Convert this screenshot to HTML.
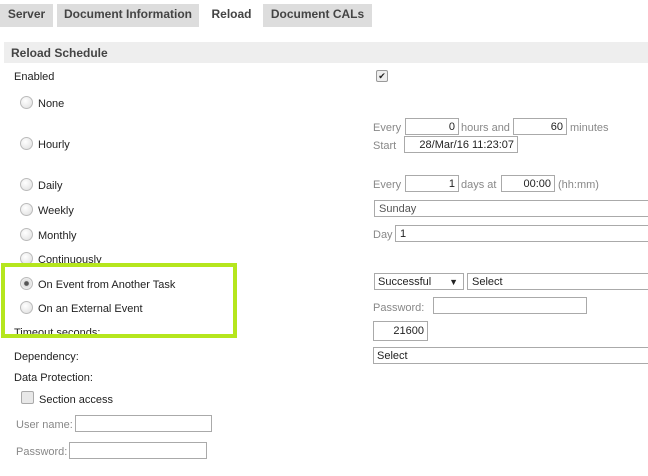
<!DOCTYPE html>
<html><head><style>
body{margin:0;width:648px;height:476px;background:#fff;font-family:"Liberation Sans",sans-serif;font-size:11px;color:#222;position:relative;overflow:hidden}
.a{position:absolute;white-space:nowrap}
.tab{position:absolute;top:4px;height:23px;background:#ddd;font-weight:bold;font-size:12px;color:#444;line-height:20px;text-align:center}
.r{position:absolute;width:11px;height:11px;border-radius:50%;border:1px solid #bbb;background:radial-gradient(circle at 40% 35%,#fff,#ddd)}
.in{position:absolute;height:17px;border:1px solid #aaa;box-sizing:border-box;background:#fff;text-align:right;padding-right:3px;line-height:16px;font-size:11px}
.g{color:#888}
</style></head><body>
<div class="tab" style="left:0;width:53px">Server</div>
<div class="tab" style="left:57px;width:142px">Document Information</div>
<div class="tab" style="left:203px;width:57px;background:#fff">Reload</div>
<div class="tab" style="left:263px;width:109px">Document CALs</div>
<div class="a" style="left:4px;top:42px;width:644px;height:21px;background:#eee;font-weight:bold;font-size:12px;color:#444;line-height:22px;padding-left:7px;box-sizing:border-box">Reload Schedule</div>
<div class="a" style="left:14px;top:71px">Enabled</div>
<div class="a" style="left:376px;top:70px;width:10px;height:10px;border:1px solid #999;border-radius:2px;background:#eee;font-size:9px;line-height:10px;text-align:center">✔</div>

<div class="r" style="left:20px;top:96px"></div><div class="a" style="left:38px;top:98px">None</div>
<div class="r" style="left:20px;top:137px"></div><div class="a" style="left:38px;top:139px">Hourly</div>
<div class="r" style="left:20px;top:178px"></div><div class="a" style="left:38px;top:180px">Daily</div>
<div class="r" style="left:20px;top:203px"></div><div class="a" style="left:38px;top:205px">Weekly</div>
<div class="r" style="left:20px;top:228px"></div><div class="a" style="left:38px;top:230px">Monthly</div>
<div class="r" style="left:20px;top:252px"></div><div class="a" style="left:38px;top:254px">Continuously</div>
<div class="r" style="left:20px;top:277px;background:radial-gradient(circle,#555 25%,#ddd 35%,#fff)"></div><div class="a" style="left:38px;top:279px">On Event from Another Task</div>
<div class="r" style="left:20px;top:301px"></div><div class="a" style="left:38px;top:303px">On an External Event</div>
<div class="a" style="left:14px;top:327px">Timeout seconds:</div>
<div class="a" style="left:1px;top:263px;width:228px;height:67px;border:4px solid #b5e61d;background:transparent"></div>
<div class="a" style="left:14px;top:351px">Dependency:</div>
<div class="a" style="left:14px;top:372px">Data Protection:</div>
<div class="a" style="left:21px;top:391px;width:11px;height:11px;border:1px solid #aaa;border-radius:2px;background:#e8e8e8"></div>
<div class="a" style="left:39px;top:394px">Section access</div>
<div class="a g" style="left:16px;top:419px">User name:</div><div class="in" style="left:75px;top:415px;width:137px"></div>
<div class="a g" style="left:16px;top:446px">Password:</div><div class="in" style="left:69px;top:442px;width:138px"></div>

<div class="a g" style="left:373px;top:122px">Every</div><div class="in" style="left:405px;top:118px;width:54px">0</div>
<div class="a g" style="left:461px;top:122px">hours and</div><div class="in" style="left:513px;top:118px;width:54px">60</div>
<div class="a g" style="left:570px;top:122px">minutes</div>
<div class="a g" style="left:373px;top:140px">Start</div><div class="in" style="left:404px;top:136px;width:114px">28/Mar/16 11:23:07</div>
<div class="a g" style="left:373px;top:179px">Every</div><div class="in" style="left:405px;top:175px;width:54px">1</div>
<div class="a g" style="left:461px;top:179px">days at</div><div class="in" style="left:501px;top:175px;width:54px">00:00</div>
<div class="a g" style="left:558px;top:179px">(hh:mm)</div>
<div class="in" style="left:374px;top:200px;width:280px;text-align:left;padding-left:4px;color:#555">Sunday</div>
<div class="a g" style="left:373px;top:229px">Day</div><div class="in" style="left:395px;top:225px;width:260px;text-align:left;padding-left:4px">1</div>
<div class="in" style="left:374px;top:273px;width:90px;text-align:left;padding-left:3px">Successful<span style="position:absolute;right:5px;font-size:9px">▼</span></div>
<div class="in" style="left:467px;top:273px;width:190px;text-align:left;padding-left:4px">Select</div>
<div class="a g" style="left:373px;top:302px">Password:</div><div class="in" style="left:433px;top:297px;width:154px"></div>
<div class="in" style="left:373px;top:321px;width:55px;height:20px;line-height:19px">21600</div>
<div class="in" style="left:373px;top:347px;width:285px;text-align:left;padding-left:3px">Select</div>
</body></html>
